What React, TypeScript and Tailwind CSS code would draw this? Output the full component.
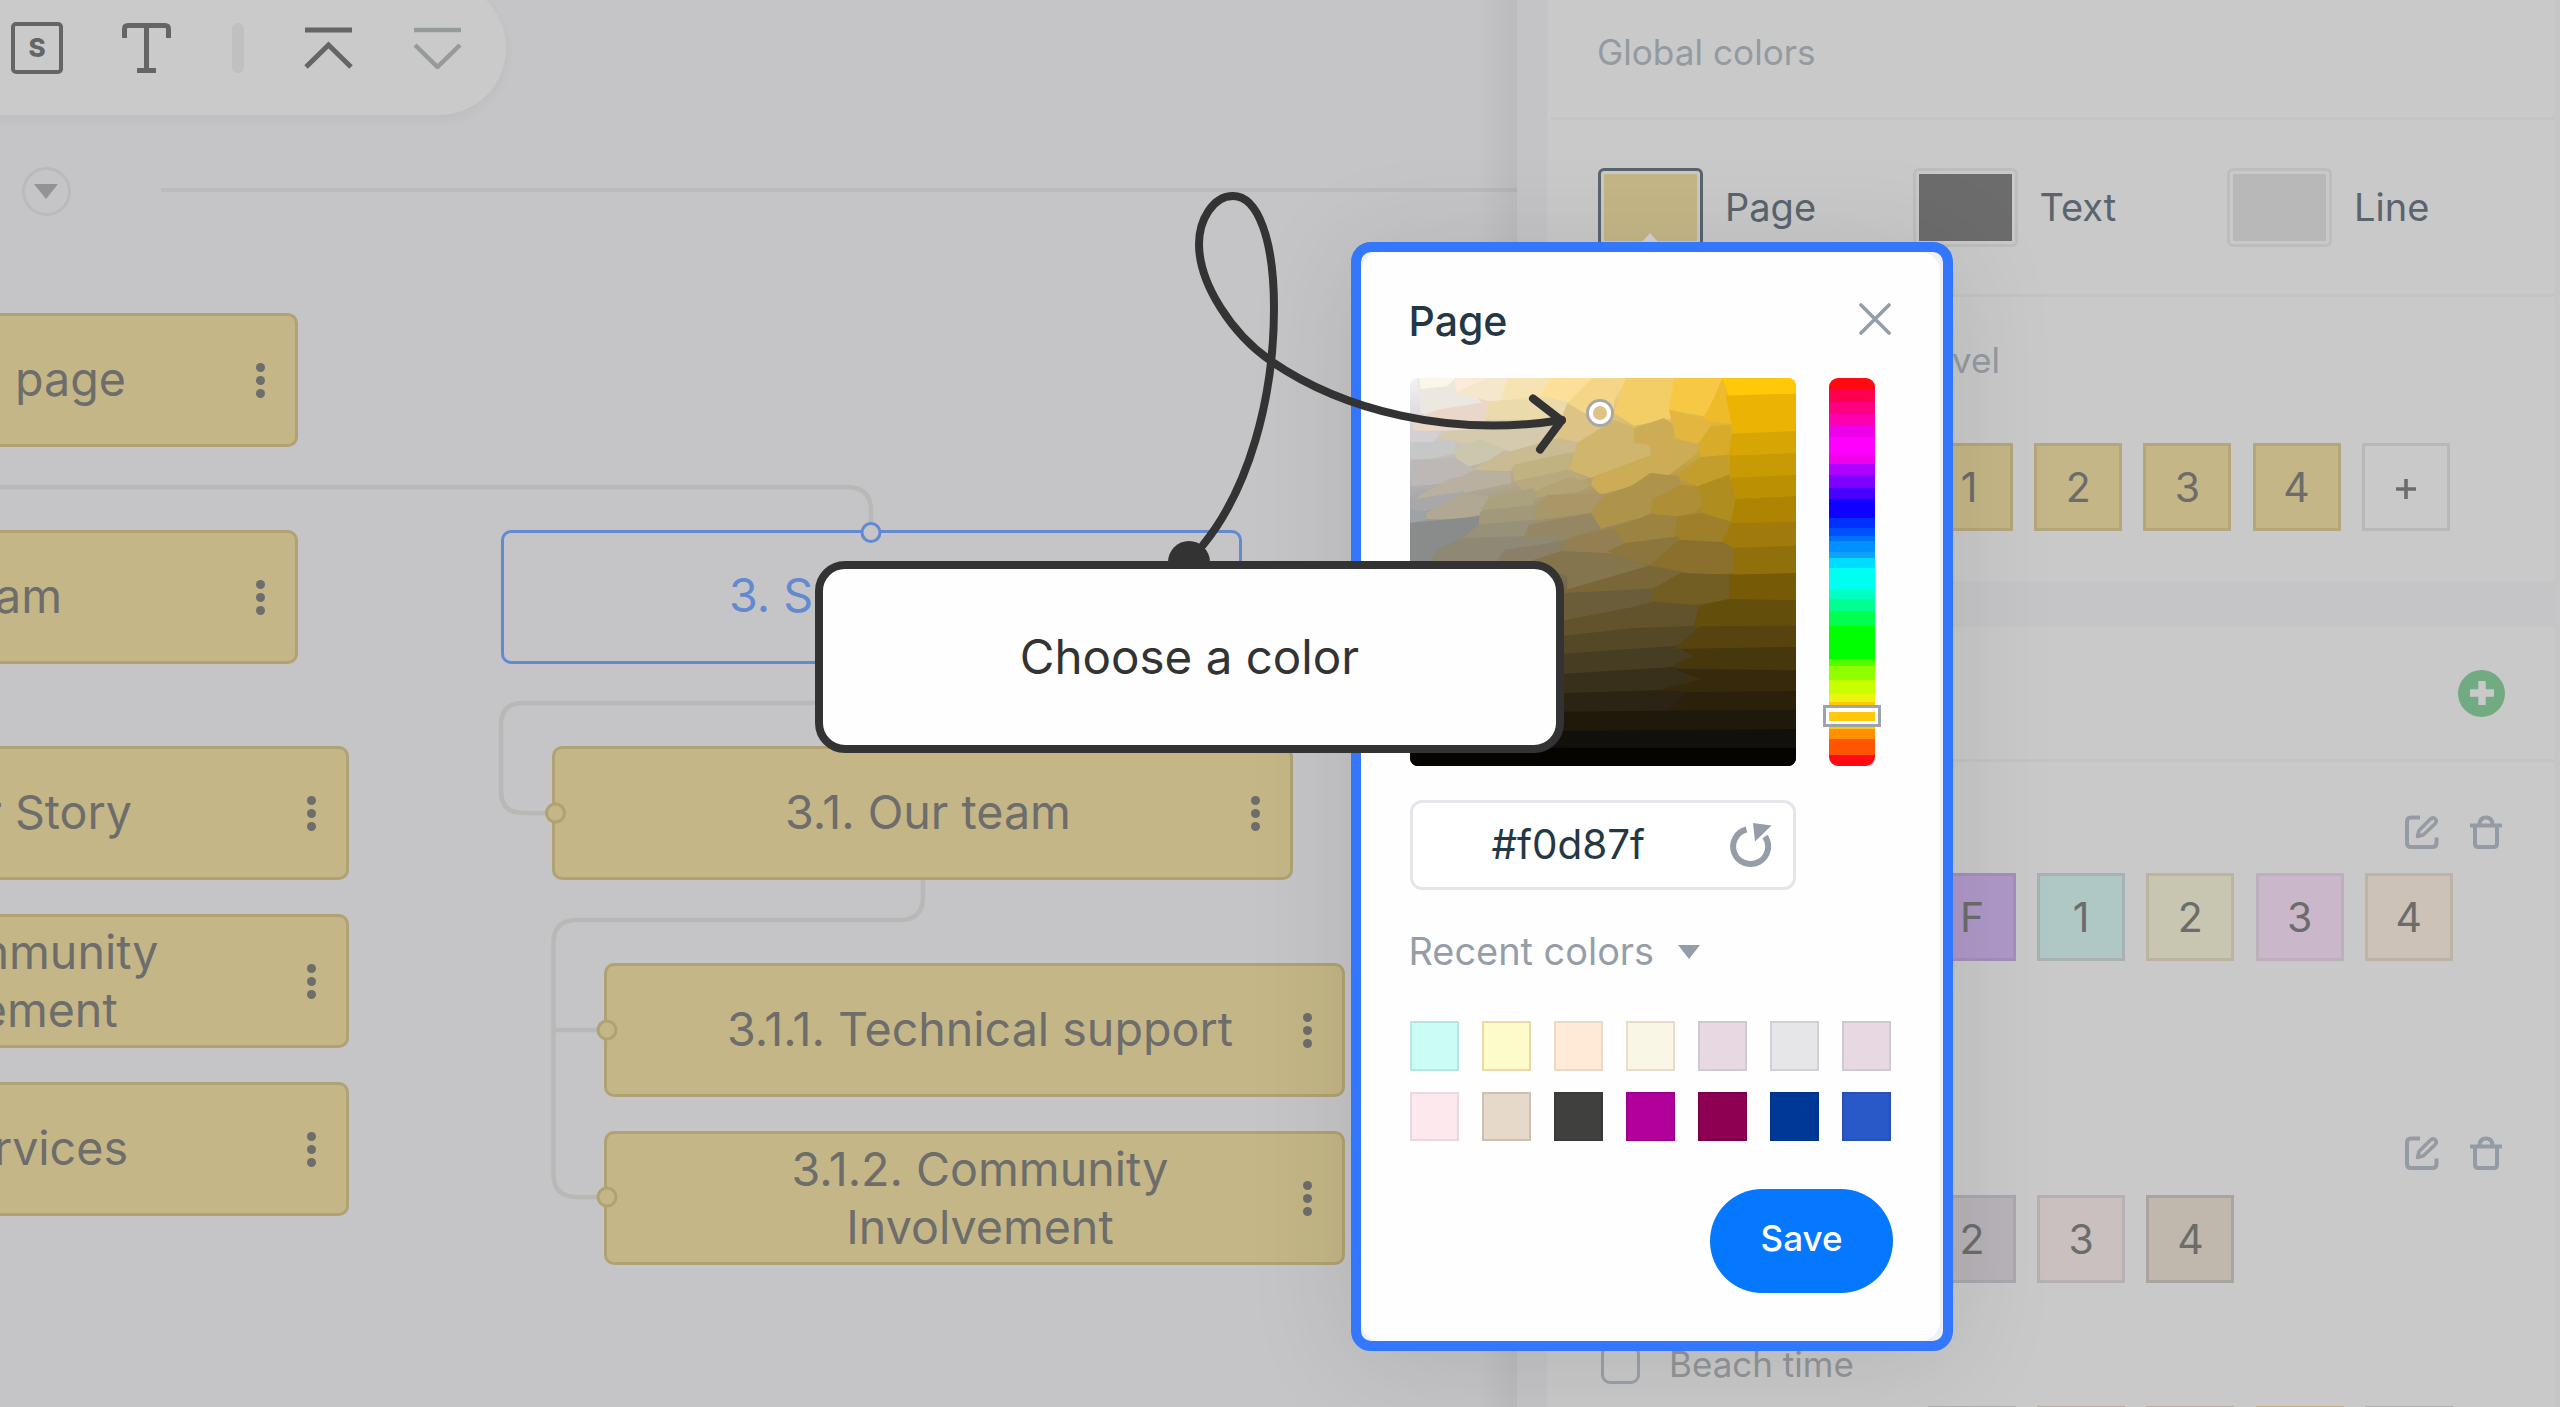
import React from "react";

type NodeProps = { place: string; lines: string[]; rightText?: string };

function Dots() {
  return (
    <div className="flex flex-col items-center gap-[4px]">
      <span className="h-[9px] w-[9px] rounded-full bg-[#6d6d6c]" />
      <span className="h-[9px] w-[9px] rounded-full bg-[#6d6d6c]" />
      <span className="h-[9px] w-[9px] rounded-full bg-[#6d6d6c]" />
    </div>
  );
}

/* A page card on the sitemap canvas. */
function PageNode({ place, lines, rightText }: NodeProps) {
  return (
    <div
      className={`absolute flex h-[134px] w-[741px] items-center justify-end rounded-[10px] border-[3px] border-[#b0a272] bg-[#c4b686] pr-[30px] ${place}`}
    >
      <div
        className={`flex-1 whitespace-nowrap text-[46.6px] leading-[58px] text-[#6d6d6c] ${
          rightText ? `text-right ${rightText}` : "pl-[50px] text-center"
        } ${lines.length === 1 ? "pb-[3px]" : ""}`}
      >
        {lines.map((l) => (
          <div key={l}>{l}</div>
        ))}
      </div>
      <Dots />
    </div>
  );
}

function Toolbar() {
  return (
    <div className="absolute -left-[200px] -top-[19px] flex h-[134px] w-[706px] items-center rounded-[67px] bg-[#cacaca] pl-[211px] shadow-[0_5px_12px_rgba(0,0,0,0.04)]">
      <div className="flex h-[52px] w-[52px] items-center justify-center rounded-[5px] border-[4px] border-[#656565] text-[26px] font-extrabold leading-none text-[#656565]">
        S
      </div>
      <svg className="ml-[59px] h-[50px] w-[49px]" viewBox="0 0 49 50" fill="none" stroke="#656565" strokeWidth="5">
        <path d="M2.5 15V6q0-3.500 3.500-3.500H43q3.500 0 3.500 3.500v9M24.500 2.500V47M15 47.500h19" />
      </svg>
      <div className="ml-[61px] h-[50px] w-[12px] rounded-full bg-[#c0c0c1]" />
      <svg className="ml-[60px] h-[42px] w-[49px]" viewBox="0 0 49 42" fill="none" stroke="#656565" strokeWidth="5">
        <path d="M1 3h47M2 40L24.500 18 47 40" />
      </svg>
      <svg className="ml-[60px] h-[42px] w-[49px]" viewBox="0 0 49 42" fill="none" stroke="#979a9a" strokeWidth="4.500">
        <path d="M1 3h47M2 18L24.500 40 47 18" />
      </svg>
    </div>
  );
}

function Canvas() {
  return (
    <main className="relative w-[1517px] shrink-0 overflow-hidden bg-[#c5c5c7]">
      <Toolbar />
      <div className="absolute left-[22px] top-[167px] flex h-[49px] w-[49px] items-center justify-center rounded-full border-[3px] border-[#bababa]">
        <svg className="mr-[1px] h-[15px] w-[24px]" viewBox="0 0 24 15" fill="#929493">
          <path d="M0 0H24L12 15Z" />
        </svg>
      </div>
      <div className="absolute left-[161px] top-[188px] h-[4px] w-[1356px] bg-[#bbbbbb]" />
      <svg className="absolute left-0 top-0 h-[1407px] w-[1517px]" viewBox="0 0 1517 1407" fill="none" stroke="#b8b8b7" strokeWidth="4.500">
        <path d="M0 487H847Q871 487 871 511V524" />
        <path d="M871 664V703H523Q501 703 501 725V791Q501 813 523 813H548" />
        <path d="M923 880V897Q923 920 900 920H577Q553.500 920 553.500 943V1174Q553.500 1197 577 1197H600M553.500 1030H600" />
      </svg>

      <PageNode place="-left-[443px] top-[313px]" lines={["1. Home page"]} rightText="pr-[130px]" />
      <PageNode place="-left-[443px] top-[530px]" lines={["2. Our team"]} rightText="pr-[194px]" />
      <PageNode place="-left-[392px] top-[746px]" lines={["2.1. Our Story"]} rightText="pr-[175px]" />
      <PageNode place="-left-[392px] top-[914px]" lines={["2.2. Community", "Involvement"]} />
      <PageNode place="-left-[392px] top-[1082px]" lines={["2.3. Services"]} rightText="pr-[179px]" />

      <div className="absolute left-[501px] top-[530px] flex h-[134px] w-[741px] items-center rounded-[10px] border-[3px] border-[#6389d0] pb-[3px] pl-[225px] text-[46.6px] text-[#6389d0]">
        3. S
      </div>
      <PageNode place="left-[552px] top-[746px]" lines={["3.1. Our team"]} />
      <PageNode place="left-[604px] top-[963px]" lines={["3.1.1. Technical support"]} />
      <PageNode place="left-[604px] top-[1131px]" lines={["3.1.2. Community", "Involvement"]} />

      <svg className="absolute left-0 top-0 h-[1407px] w-[1517px]" viewBox="0 0 1517 1407" strokeWidth="3">
        <circle cx="871" cy="532.500" r="9" fill="#c5c5c7" stroke="#6389d0" />
        <g fill="#c4b686" stroke="#b0a272">
          <circle cx="555.500" cy="813" r="9" />
          <circle cx="607" cy="1030" r="9" />
          <circle cx="607" cy="1197" r="9" />
        </g>
      </svg>
      <div className="absolute right-0 top-0 h-full w-[40px] bg-gradient-to-r from-transparent to-black/5" />
    </main>
  );
}

function GlobalColor({ label, ring, fill }: { label: string; ring: string; fill: string }) {
  return (
    <div className="flex w-[314.500px] items-center gap-[22px]">
      <div className={`h-[79px] w-[105px] rounded-[6px] border-[3px] p-[3px] ${ring}`}>
        <div className={`h-full w-full ${fill}`} />
      </div>
      <span className="pb-[2px] text-[38px] leading-none text-[#5a646e]">{label}</span>
    </div>
  );
}

function Chip({ label, tone }: { label: string; tone: string }) {
  return (
    <div className={`flex h-[88px] w-[88px] items-center justify-center border-[3px] text-[41px] leading-none text-[#6c6d6a] ${tone}`}>
      {label}
    </div>
  );
}

function RowActions() {
  return (
    <div className="flex items-center gap-[31px] text-[#959ba4]">
      <svg className="h-[34px] w-[34px]" viewBox="0 0 34 34" fill="none" stroke="currentColor" strokeWidth="4" strokeLinejoin="round">
        <path d="M15 2.500H6Q2 2.500 2 6.500V28Q2 32 6 32H27.500Q31.500 32 31.500 28V22.500" />
        <path d="M12.500 21.500L14 15.500 25.500 4Q27.500 2 29.800 3.300 32.500 5.500 30.300 8.500L18.500 19.800Z" strokeWidth="3.600" />
      </svg>
      <svg className="h-[34px] w-[32px]" viewBox="0 0 32 34" fill="none" stroke="currentColor" strokeWidth="4">
        <path d="M0 10.500H32M9.500 10Q9.500 2.500 16 2.500T22.500 10M5 11V28.500Q5 32 8.500 32H23.500Q27 32 27 28.500V11" />
      </svg>
    </div>
  );
}

const KHAKI = "border-[#b5a67b] bg-[#c4b686]";

function SidePanel() {
  return (
    <aside className="flex flex-1 bg-[#c4c4c6] pl-[30px]">
      <div className="flex w-[1007px] shrink-0 flex-col bg-[#c9c9c9]">
        <div className="ml-[4px] flex h-[120px] shrink-0 items-center border-b-[3px] border-[#c3c3c3] pb-[13px] pl-[46px] text-[35.2px] text-[#949aa1]">
          Global colors
        </div>
        <div className="ml-[4px] flex h-[177px] shrink-0 items-start border-b-[3px] border-[#c3c3c3] pl-[47px] pt-[48px]">
          <GlobalColor label="Page" ring="border-[#5a646e]" fill="bg-[#c4b686]" />
          <GlobalColor label="Text" ring="border-[#bdbdbd]" fill="bg-[#6c6c6c]" />
          <GlobalColor label="Line" ring="border-[#bdbdbd]" fill="bg-[#b8b8b8]" />
        </div>
        <div className="flex h-[284px] shrink-0 flex-col pt-[41px]">
          <div className="h-[44px] w-[453px] whitespace-nowrap text-right text-[35.2px] leading-[44px] text-[#949aa1]">Colors by level</div>
          <div className="mt-[61px] flex gap-[21.200px] pl-[378px]">
            <Chip label="1" tone={KHAKI} />
            <Chip label="2" tone={KHAKI} />
            <Chip label="3" tone={KHAKI} />
            <Chip label="4" tone={KHAKI} />
            <div className="flex h-[88px] w-[88px] items-center justify-center border-[3px] border-[#b8b8b8]">
              <svg className="mt-[3px] h-[20px] w-[20px]" viewBox="0 0 20 20" stroke="#6c6d6a" strokeWidth="3.600">
                <path d="M0 10H20M10 0V20" />
              </svg>
            </div>
          </div>
        </div>
        <div className="h-[46px] shrink-0 bg-[#c5c5c7]" />
        <div className="ml-[4px] flex h-[135px] shrink-0 items-center justify-end border-b-[3px] border-[#c3c3c3] pr-[49px]">
          <div className="flex h-[47px] w-[47px] items-center justify-center rounded-full bg-[#72ab82]">
            <svg className="h-[24px] w-[24px]" viewBox="0 0 24 24" stroke="#c9c9c9" strokeWidth="7.400" strokeLinejoin="round">
              <path d="M0 12H24M12 0V24" />
            </svg>
          </div>
        </div>
        <div className="flex h-[111px] shrink-0 items-end justify-end pb-[24px] pr-[52px]">
          <RowActions />
        </div>
        <div className="flex shrink-0 gap-[21.200px] pl-[381px]">
          <Chip label="F" tone="border-[#a58ebd] bg-[#ae98c8]" />
          <Chip label="1" tone="border-[#a8b2b4] bg-[#b0c8c5]" />
          <Chip label="2" tone="border-[#bcb4a0] bg-[#c8c6b0]" />
          <Chip label="3" tone="border-[#bcb0bc] bg-[#cab8ca]" />
          <Chip label="4" tone="border-[#bdb4a4] bg-[#ccc2b8]" />
        </div>
        <div className="mt-[175px] flex shrink-0 justify-end pr-[52px]">
          <RowActions />
        </div>
        <div className="mt-[25px] flex shrink-0 gap-[21.200px] pl-[381px]">
          <Chip label="2" tone="border-[#a8a8ae] bg-[#b7b3b8]" />
          <Chip label="3" tone="border-[#b4b0b3] bg-[#cac0c0]" />
          <Chip label="4" tone="border-[#a8a59e] bg-[#c0b8ac]" />
        </div>
        <div className="mt-[62px] flex shrink-0 items-center pl-[54px]">
          <div className="h-[39px] w-[39px] rounded-[9px] border-[3px] border-[#9aa1a8]" />
          <span className="pl-[29px] text-[35px] leading-none text-[#929699]">Beach time</span>
        </div>
        <div className="mt-[22px] flex h-px shrink-0 gap-[21.200px] pl-[381px]">
          <span className="w-[88px] bg-[#aeaeb0]" />
          <span className="w-[88px] bg-[#b8ada4]" />
          <span className="w-[88px] bg-[#b8ada4]" />
          <span className="w-[88px] bg-[#bfae86]" />
          <span className="w-[88px] bg-[#b0b0b0]" />
        </div>
      </div>
      <div className="flex-1 bg-[#c6c6c7]" />
    </aside>
  );
}

/* Stops of the hue bar: colour class and relative height. */
const HUES: [string, number][] = [
  ["bg-[#ff0a12]", 31],
  ["bg-[#ff0050]", 36],
  ["bg-[#ff0080]", 33],
  ["bg-[#ff00b0]", 35],
  ["bg-[#ee00e8]", 30],
  ["bg-[#ff00ff]", 51],
  ["bg-[#ee00e8]", 25],
  ["bg-[#b000ff]", 30],
  ["bg-[#7f00ff]", 36],
  ["bg-[#4800ff]", 32],
  ["bg-[#1000ff]", 52],
  ["bg-[#0030ff]", 28],
  ["bg-[#0050ff]", 23],
  ["bg-[#0070ff]", 14],
  ["bg-[#0090ff]", 31],
  ["bg-[#10a0ff]", 16],
  ["bg-[#00dcff]", 28],
  ["bg-[#00fff0]", 61],
  ["bg-[#00ffc0]", 27],
  ["bg-[#00ff90]", 32],
  ["bg-[#00ff50]", 43],
  ["bg-[#00ff00]", 92],
  ["bg-[#50ff00]", 20],
  ["bg-[#90ff00]", 39],
  ["bg-[#c8ff00]", 39],
  ["bg-[#eaf40c]", 23],
  ["bg-[#ffc80a]", 76],
  ["bg-[#ff9000]", 27],
  ["bg-[#ff5500]", 45],
  ["bg-[#ff0a12]", 31],
];

/* Flat patches of the saturation/brightness field, painted in order. */
const PATCHES: [string, string][] = [
  ["#ece8e0", "M50 25H180L260 120 150 160 60 130Z"],
  ["#faf7e6", "M55 25H165L140 50 60 58Z"],
  ["#feead8", "M160 25H265L170 70Z"],
  ["#f4e7cb", "M265 25H330L360 105 265 95 165 68Z"],
  ["#f6e3b3", "M320 25H460L425 85 300 90Z"],
  ["#e9d8c9", "M110 120L265 95 250 180 40 185 35 150Z"],
  ["#fcdf98", "M450 25H600L570 65 510 100 415 80Z"],
  ["#ebdaab", "M265 95L420 82 520 100 470 150 250 150Z"],
  ["#f5d588", "M575 25H680L640 95 640 140 510 145 500 100Z"],
  ["#f3ce66", "M675 25H825L810 148 700 168 640 130Z"],
  ["#f7c843", "M820 25H970L940 90 910 140 805 120Z"],
  ["#eebb2b", "M965 25H990L1000 165 905 150 940 85Z"],
  ["#d4cfd5", "M28 180L120 190 90 225 30 220Z"],
  ["#d5caae", "M130 185L480 165 470 205 330 245 110 205Z"],
  ["#dec387", "M500 100L560 135 640 145 600 185 530 220 460 200Z"],
  ["#c6c7c7", "M28 218L160 215 170 250 30 280Z"],
  ["#cac7ae", "M160 235L240 208 315 240 260 275 200 292 165 275Z"],
  ["#cabb92", "M270 268L400 225 530 215 535 245 340 285 330 305 215 300Z"],
  ["#bdb8b5", "M30 270L165 265 220 300 150 340 30 350Z"],
  ["#d0b56d", "M530 220L640 150 700 175 750 235 755 255 570 325 505 300Z"],
  ["#ccad55", "M700 175L790 145 825 170 820 210 900 220 890 250 800 320 750 310 690 350 600 375 570 345 580 320 750 260 750 225 700 220Z"],
  ["#e3b640", "M805 120L910 145 950 180 890 222 825 205Z"],
  ["#d8ab2a", "M895 220L930 170 990 165 985 255 900 265Z"],
  ["#c1b282", "M340 285L510 248 505 300 450 330 340 335Z"],
  ["#b8aa7e", "M340 335L500 300 560 325 480 360 370 365Z"],
  ["#b9b0a0", "M60 375L150 325 330 305 330 340 190 370 190 395 40 390Z"],
  ["#b3a375", "M400 385L420 355 510 322 575 345 540 365Z"],
  ["#c49e2d", "M825 318L900 262 985 255 985 315 890 350Z"],
  ["#a8a8a8", "M30 390L190 365 190 390 75 425 30 425Z"],
  ["#b0a893", "M75 430L190 370 265 380 240 435 170 450 75 448Z"],
  ["#aaa17d", "M265 385L400 355 400 410 240 420Z"],
  ["#a99767", "M400 420L440 375 610 372 570 430 405 452Z"],
  ["#ae934b", "M610 380L700 345 750 310 835 320 840 345 755 390 750 435 600 478 570 430Z"],
  ["#af8f36", "M755 390L840 345 890 350 910 400 880 430 830 440 755 435Z"],
  ["#b08d1f", "M890 350L985 315 1010 390 990 455 905 430 905 390Z"],
  ["#9da4a8", "M30 420L75 425 75 450 30 460Z"],
  ["#a19979", "M240 425L400 405 405 452 230 465Z"],
  ["#898c8b", "M28 460L235 440 235 465 190 500 110 540 90 575H28Z"],
  ["#98917a", "M235 465L405 450 370 500 190 505Z"],
  ["#958763", "M385 465L570 430 600 475 480 515 370 505Z"],
  ["#8f8874", "M190 505L480 500 390 560 300 575H90L110 540Z"],
  ["#8a8069", "M310 540L480 515 480 545 385 575H290Z"],
  ["#947f52", "M480 540L520 500 650 475 675 520 620 555Z"],
  ["#9c8340", "M640 478L750 432 830 440 835 500 675 525Z"],
  ["#9f7f29", "M830 440L905 430 995 460 970 520 840 515 820 500Z"],
  ["#84754d", "M390 575L480 545 620 550 745 590 500 665V620Z"],
  ["#8c763d", "M620 545L675 520 835 500 840 540 750 585 700 575Z"],
  ["#8a702c", "M835 510L970 518 1005 545 1000 610 900 618 750 585Z"],
  ["#796738", "M490 662L745 588 840 610 760 655 490 672Z"],
  ["#725d23", "M760 655L840 610 1000 615 985 690 880 705 750 695Z"],
  ["#6b5c3a", "M490 670L760 658 750 690 690 715 490 755Z"],
  ["#62532d", "M490 752L700 712 760 696 895 708 880 768 700 785 490 802Z"],
  ["#544827", "M490 798L700 775 900 768 830 830 490 855Z"],
  ["#473d22", "M490 852L830 828 880 842 810 895 490 915Z"],
  ["#39301b", "M490 912L820 892 900 910 780 960 490 972Z"],
  ["#2b2415", "M490 970L780 962 890 968 800 1025 490 1032Z"],
  ["#ffc808", "M965 25H1186V72L985 78Z"],
  ["#ebb304", "M975 78L1186 72V185L1000 195Z"],
  ["#d8a604", "M993 192L1186 184V250L985 258Z"],
  ["#c89a04", "M985 258L1186 250V316L990 325Z"],
  ["#bb9003", "M990 325L1186 316V380L1005 388Z"],
  ["#ae8402", "M1005 388L1186 380V458L990 462Z"],
  ["#a07a0c", "M990 460L1186 457V530L1000 535 965 515Z"],
  ["#90700a", "M1000 535L1186 528V612L1000 615Z"],
  ["#775a06", "M985 615L1186 610V692L985 688Z"],
  ["#644e0c", "M895 708L985 688 1186 692V768L880 772Z"],
  ["#56430f", "M900 770L1186 768V832L820 838Z"],
  ["#46370d", "M840 838L1186 832V902L810 892 880 860Z"],
  ["#372a0c", "M820 898L1186 902V965L780 962 900 930Z"],
  ["#2b210b", "M860 968L1186 964V1022L800 1025Z"],
  ["#1f190c", "M28 1030L1186 1020V1080L28 1090Z"],
  ["#12100a", "M28 1088L1186 1078V1135H28Z"],
  ["#050400", "M28 1134H1186V1190H28Z"],
];

const RECENT = [
  "bg-[#ccfdf5] border-[#b4e6e4]",
  "bg-[#fefbca] border-[#eed8a8]",
  "bg-[#ffead8] border-[#e8dac6]",
  "bg-[#faf6e6] border-[#e8dccb]",
  "bg-[#e8d8e2] border-[#cbcbd1]",
  "bg-[#e6e6e9] border-[#d4cfd6]",
  "bg-[#e8d8e2] border-[#cbcbd1]",
  "bg-[#fde8ed] border-[#e8d8e4]",
  "bg-[#e6d9c9] border-[#cbc0b2]",
  "bg-[#40403e] border-[#3a3a38]",
  "bg-[#b2009c] border-[#9c008a]",
  "bg-[#8d0052] border-[#7c0048]",
  "bg-[#003897] border-[#00358c]",
  "bg-[#2959c8] border-[#2850b4]",
];

function ColorPopover() {
  return (
    <>
      <svg className="absolute left-[1641px] top-[233px] h-[10px] w-[18px]" viewBox="0 0 18 10" fill="#d3d3d3">
        <path d="M9 0L18 10H0Z" />
      </svg>
      <section className="absolute left-[1351px] top-[242px] flex h-[1109px] w-[602px] flex-col rounded-[20px] border-[10.500px] border-[#3377ff] bg-[#f1f1f5] shadow-[0_10px_110px_rgba(0,0,0,0.1)]">
        <div className="mr-[3px] flex flex-1 flex-col rounded-[20px] bg-[#fefefe] pl-[48.500px] pr-[47px]">
          <header className="mt-[39px] flex h-[60px] items-center justify-between">
            <h2 className="-ml-[1px] text-[41px] font-medium leading-none text-[#243746]">Page</h2>
            <svg className="mb-[4px] mr-[2px] h-[32px] w-[32px]" viewBox="0 0 32 32" stroke="#959ea8" strokeWidth="3.600" strokeLinecap="round">
              <path d="M2 2L30 30M30 2L2 30" />
            </svg>
          </header>
          <div className="mt-[27px] flex gap-[33px]">
            <div className="relative h-[388px] w-[386px] overflow-hidden rounded-[8px] bg-[linear-gradient(to_top,#050300,transparent),linear-gradient(to_right,#f2f2f8,#f5d688_52%,#ffc80a)]">
              <svg className="h-[388px] w-[386px]" viewBox="28 25 1158 1164">
                {PATCHES.map(([fill, d]) => (
                  <path key={d} d={d} fill={fill} />
                ))}
              </svg>
              <div className="absolute left-[176px] top-[21px] h-[28px] w-[28px] rounded-full border-[3px] border-[#a8a8a8]">
                <div className="h-full w-full rounded-full border-[4px] border-white bg-[#dec387]" />
              </div>
            </div>
            <div className="relative flex h-[388px] w-[46px] flex-col">
              <div className="flex flex-1 flex-col overflow-hidden rounded-[9px]">
                {HUES.map(([tone, h], i) => (
                  <div key={i} className={tone} style={{ flexGrow: h }} />
                ))}
              </div>
              <div className="absolute -left-[6px] top-[327px] flex h-[22px] w-[58px] items-center justify-center border-[3px] border-[#9da3a9] bg-white">
                <div className="h-[9px] w-[46px] bg-[#ffc80a]" />
              </div>
            </div>
          </div>
          <div className="mt-[34px] flex h-[90px] w-[386px] items-center rounded-[12px] border-[3px] border-[#e5e5ea] bg-white pl-[79px] pr-[21px]">
            <span className="flex-1 text-[40.400px] leading-none text-[#243746]">#f0d87f</span>
            <svg className="h-[46px] w-[43px]" viewBox="0 0 43 46" fill="none">
              <path d="M17.500 7.500A17.500 17.500 0 1 0 36 14.500" stroke="#959ea8" strokeWidth="6" />
              <path d="M24 1L42.500 3.500 26 19.500Z" fill="#959ea8" />
            </svg>
          </div>
          <div className="mt-[37px] flex h-[50px] items-center gap-[24px] text-[#959ea8]">
            <span className="-ml-[1px] text-[37.900px] leading-none">Recent colors</span>
            <svg className="mb-[1px] h-[14px] w-[22px]" viewBox="0 0 22 14" fill="currentColor">
              <path d="M0 0H22L11 14Z" />
            </svg>
          </div>
          <div className="mt-[44px] grid w-[482px] grid-cols-7 gap-x-[23px] gap-y-[21px]">
            {RECENT.map((tone, i) => (
              <div key={i} className={`h-[49.500px] w-[49px] border-[2px] ${tone}`} />
            ))}
          </div>
          <button className="mt-[48px] h-[104px] w-[183px] self-end rounded-[52px] bg-[#0677ff] pb-[5px] text-[35px] font-medium leading-none text-white">
            Save
          </button>
        </div>
      </section>
    </>
  );
}

/* Callout box with its looping arrow towards the colour field. */
function Callout() {
  return (
    <>
      <svg className="absolute left-[1150px] top-[160px] h-[420px] w-[440px]" viewBox="1150 160 440 420" fill="none" stroke="#333333" strokeWidth="8" strokeLinecap="round" strokeLinejoin="round">
        <circle cx="1189" cy="562" r="21" fill="#333333" stroke="none" />
        <path d="M1203 545C1248 490 1274 400 1274 308C1274 240 1258 196 1233 196C1213 196 1199 220 1199 244C1199 284 1232 334 1271 361C1342 410 1450 438 1562 420" />
        <path d="M1533 398.500L1561.500 420.500L1540 449.500" />
      </svg>
      <div className="absolute left-[815px] top-[561px] flex h-[192px] w-[749px] items-center justify-center rounded-[30px] border-[8px] border-[#333333] bg-[#fefefe] text-[47.500px] leading-none text-[#333333]">
        Choose a color
      </div>
    </>
  );
}

export default function App() {
  return (
    <div className="relative flex h-[1407px] w-[2560px] overflow-hidden bg-[#c5c5c7] font-['Inter',sans-serif]">
      <Canvas />
      <SidePanel />
      <ColorPopover />
      <Callout />
    </div>
  );
}
